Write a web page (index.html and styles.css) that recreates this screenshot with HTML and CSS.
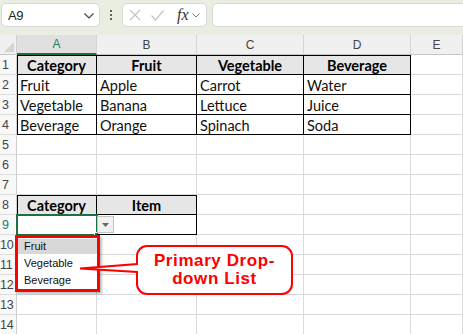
FILE: index.html
```html
<!DOCTYPE html>
<html>
<head>
<meta charset="utf-8">
<link rel="stylesheet" href="styles.css">
</head>
<body>
<div class="app">
  <div class="fbar">
    <div class="namebox">
      <span class="ref">A9</span>
      <svg class="chev" width="10" height="6" viewBox="0 0 10 6"><polyline points="0.5,0.5 5,5 9.5,0.5" fill="none" stroke="#444" stroke-width="1.2"/></svg>
    </div>
    <div class="dots"><i></i><i></i><i></i></div>
    <div class="fbtns">
      <svg width="12" height="12" viewBox="0 0 12 12"><path d="M1 1 L11 11 M11 1 L1 11" stroke="#c4c4c4" stroke-width="1.2" fill="none"/></svg>
      <svg width="13" height="11" viewBox="0 0 13 11"><path d="M0.5 5.5 L4.5 10 L12.5 0.5" stroke="#c4c4c4" stroke-width="1.2" fill="none"/></svg>
      <span class="fx">fx</span>
      <svg class="chev2" width="8" height="5" viewBox="0 0 8 5"><polyline points="0.5,0.5 4,4 7.5,0.5" fill="none" stroke="#777" stroke-width="1"/></svg>
    </div>
    <div class="finput"></div>
  </div>

  <div class="sheet">
    <div class="ch corner"><span class="tri"></span></div>
    <div class="ch sel">A</div><div class="ch">B</div><div class="ch">C</div><div class="ch">D</div><div class="ch">E</div>

    <div class="rh">1</div>
    <div class="c t tl tt h">Category</div><div class="c t tt h">Fruit</div><div class="c t tt h">Vegetable</div><div class="c t tt h">Beverage</div><div class="c"></div>

    <div class="rh">2</div>
    <div class="c t tl">Fruit</div><div class="c t">Apple</div><div class="c t">Carrot</div><div class="c t">Water</div><div class="c"></div>

    <div class="rh">3</div>
    <div class="c t tl">Vegetable</div><div class="c t">Banana</div><div class="c t">Lettuce</div><div class="c t">Juice</div><div class="c"></div>

    <div class="rh">4</div>
    <div class="c t tl">Beverage</div><div class="c t">Orange</div><div class="c t">Spinach</div><div class="c t">Soda</div><div class="c"></div>

    <div class="rh">5</div>
    <div class="c"></div><div class="c"></div><div class="c"></div><div class="c"></div><div class="c"></div>

    <div class="rh">6</div>
    <div class="c"></div><div class="c"></div><div class="c"></div><div class="c"></div><div class="c"></div>

    <div class="rh">7</div>
    <div class="c"></div><div class="c"></div><div class="c"></div><div class="c"></div><div class="c"></div>

    <div class="rh">8</div>
    <div class="c t tl tt h">Category</div><div class="c t tt h">Item</div><div class="c"></div><div class="c"></div><div class="c"></div>

    <div class="rh rsel">9</div>
    <div class="c t tl active"><span class="handle"></span></div><div class="c t"><span class="ddbtn"><svg width="7" height="4" viewBox="0 0 7 4"><polygon points="0,0 7,0 3.5,4" fill="#666"/></svg></span></div><div class="c"></div><div class="c"></div><div class="c"></div>

    <div class="rh n2">10</div>
    <div class="c"></div><div class="c"></div><div class="c"></div><div class="c"></div><div class="c"></div>

    <div class="rh n2">11</div>
    <div class="c"></div><div class="c"></div><div class="c"></div><div class="c"></div><div class="c"></div>

    <div class="rh n2">12</div>
    <div class="c"></div><div class="c"></div><div class="c"></div><div class="c"></div><div class="c"></div>

    <div class="rh n2">13</div>
    <div class="c"></div><div class="c"></div><div class="c"></div><div class="c"></div><div class="c"></div>

    <div class="rh n2">14</div>
    <div class="c"></div><div class="c"></div><div class="c"></div><div class="c"></div><div class="c"></div>

    <ul class="ddlist">
      <li class="hi">Fruit</li>
      <li>Vegetable</li>
      <li>Beverage</li>
    </ul>

    <svg class="callout-shape" width="230" height="62" viewBox="0 0 230 62">
      <path d="M77 6 H212 A10 10 0 0 1 222 16 V44 A10 10 0 0 1 212 54 H77 A10 10 0 0 1 67 44 V32 L10 28.5 L67 24 V16 A10 10 0 0 1 77 6 Z" fill="#fff" stroke="#f00" stroke-width="2"/>
    </svg>
    <div class="callout-text">Primary Drop-<br>down List</div>
  </div>
</div>
</body>
</html>
```

FILE: styles.css
```css
* { box-sizing: border-box; }
html, body { margin: 0; padding: 0; background: #fff; }
body { width: 463px; height: 334px; overflow: hidden; font-family: "Lato", "Noto Sans", sans-serif; }

.app { display: flex; flex-direction: column; }

.fbar {
  height: 35px;
  background: #e8eee2;
  display: flex;
  align-items: flex-start;
  padding: 3px 0 0 1px;
}
.namebox {
  width: 99px; height: 24px;
  background: #fff;
  border: 1px solid #d6dad2;
  border-radius: 5px;
  display: flex; align-items: center; justify-content: space-between;
  padding: 0 5px 0 6px;
}
.ref { font-family: "Liberation Sans", sans-serif; font-size: 13px; color: #222; letter-spacing: -0.5px; }
.chev { margin-top: 1px; }
.dots { width: 22px; height: 24px; display: flex; flex-direction: column; align-items: center; justify-content: center; gap: 2px; }
.dots i { display: block; width: 2px; height: 2px; background: #333; border-radius: 1px; }
.fbtns {
  width: 85px; height: 24px;
  background: #fff;
  border: 1px solid #d6dad2;
  border-radius: 5px;
  display: flex; align-items: center;
  padding: 0 0 0 6px; gap: 10px;
}
.fx { font-family: "Liberation Serif", serif; font-style: italic; font-size: 16px; color: #333; margin-left: 3px; }
.chev2 { margin-left: -7px; }
.finput {
  flex: 1; height: 24px; margin-left: 5px;
  background: #fff;
  border: 1px solid #d6dad2; border-right: none;
  border-radius: 5px 0 0 5px;
}

.sheet {
  position: relative;
  display: grid;
  grid-template-columns: 17px 80px 100px 107px 107px 52px;
  grid-auto-rows: 20px;
}
.ch {
  background: #f0f0f0;
  border-bottom: 1px solid #c6c6c6;
  border-right: 1px solid #d4d4d4;
  font-family: "Liberation Sans", sans-serif;
  font-size: 12px;
  color: #444;
  text-align: center;
  line-height: 20px;
}
.ch.sel { background: #e0e0e0; color: #1e7a66; border-bottom: 2px solid #1e6e3f; line-height: 19px; }
.corner { position: relative; border-right: 1px solid #cfcfcf; }
.tri { position: absolute; right: 2px; bottom: 2px; width: 0; height: 0; border-left: 10px solid transparent; border-bottom: 10px solid #d4d4d4; }

.rh {
  background: #f8f8f8;
  border-right: 1px solid #cfcfcf;
  border-bottom: 1px solid #dedede;
  font-family: "Liberation Sans", sans-serif;
  font-size: 12.5px;
  color: #444;
  padding-left: 2px;
  line-height: 21px;
  white-space: nowrap;
}
.rh.n2 { padding-left: 0; letter-spacing: -0.3px; }
.rh.rsel { color: #1e7a66; }

.c {
  border-right: 1px solid #dadada;
  border-bottom: 1px solid #dadada;
  font-size: 14.5px;
  color: #111;
  line-height: 21px;
  padding-left: 3px;
  white-space: nowrap;
  overflow: visible;
}
.c.t { border-right-color: #000; border-bottom-color: #000; }
.c.tl { box-shadow: inset 1px 0 0 #000; }
.c.tt { box-shadow: inset 0 1px 0 #000; }
.c.tl.tt { box-shadow: inset 1px 1px 0 #000; }
.c.h { background: #e7e6e6; font-weight: 700; text-align: center; padding-left: 0; color: #000; }
.c.active { position: relative; box-shadow: none; outline: 2px solid #1f6f43; outline-offset: -1px; }
.handle { position: absolute; right: -3px; bottom: -3px; width: 5px; height: 5px; background: #1f6f43; border: 1px solid #fff; }
.c:has(.ddbtn) { position: relative; }
.ddbtn {
  position: absolute; left: 0; top: 1px;
  width: 17px; height: 17px;
  background: #f1f1f1;
  border: 1px solid #c3c3c3;
  display: flex; align-items: center; justify-content: center;
}

.ddlist {
  position: absolute;
  left: 15px; top: 200px;
  width: 85px; height: 57px;
  margin: 0; padding: 1px 0 0 0;
  list-style: none;
  background: #fff;
  border: 3px solid #f00;
  box-shadow: 2px 2px 2px rgba(0,0,0,0.25);
  font-family: "Liberation Sans", sans-serif;
  font-size: 11px;
  color: #111;
}
.ddlist li { height: 17px; line-height: 17px; padding-left: 6px; }
.ddlist li.hi { background: #d8d8d8; height: 15px; line-height: 15px; margin-bottom: 1px; }

.callout-shape { position: absolute; left: 70px; top: 205px; }
.callout-text {
  position: absolute; left: 137px; top: 211px; width: 155px; height: 48px;
  display: flex; align-items: center; justify-content: center; text-align: center;
  font-family: "Liberation Sans", sans-serif; font-weight: 700; font-size: 17px; line-height: 18px;
  letter-spacing: 0.6px;
  color: #f00;
}
```
